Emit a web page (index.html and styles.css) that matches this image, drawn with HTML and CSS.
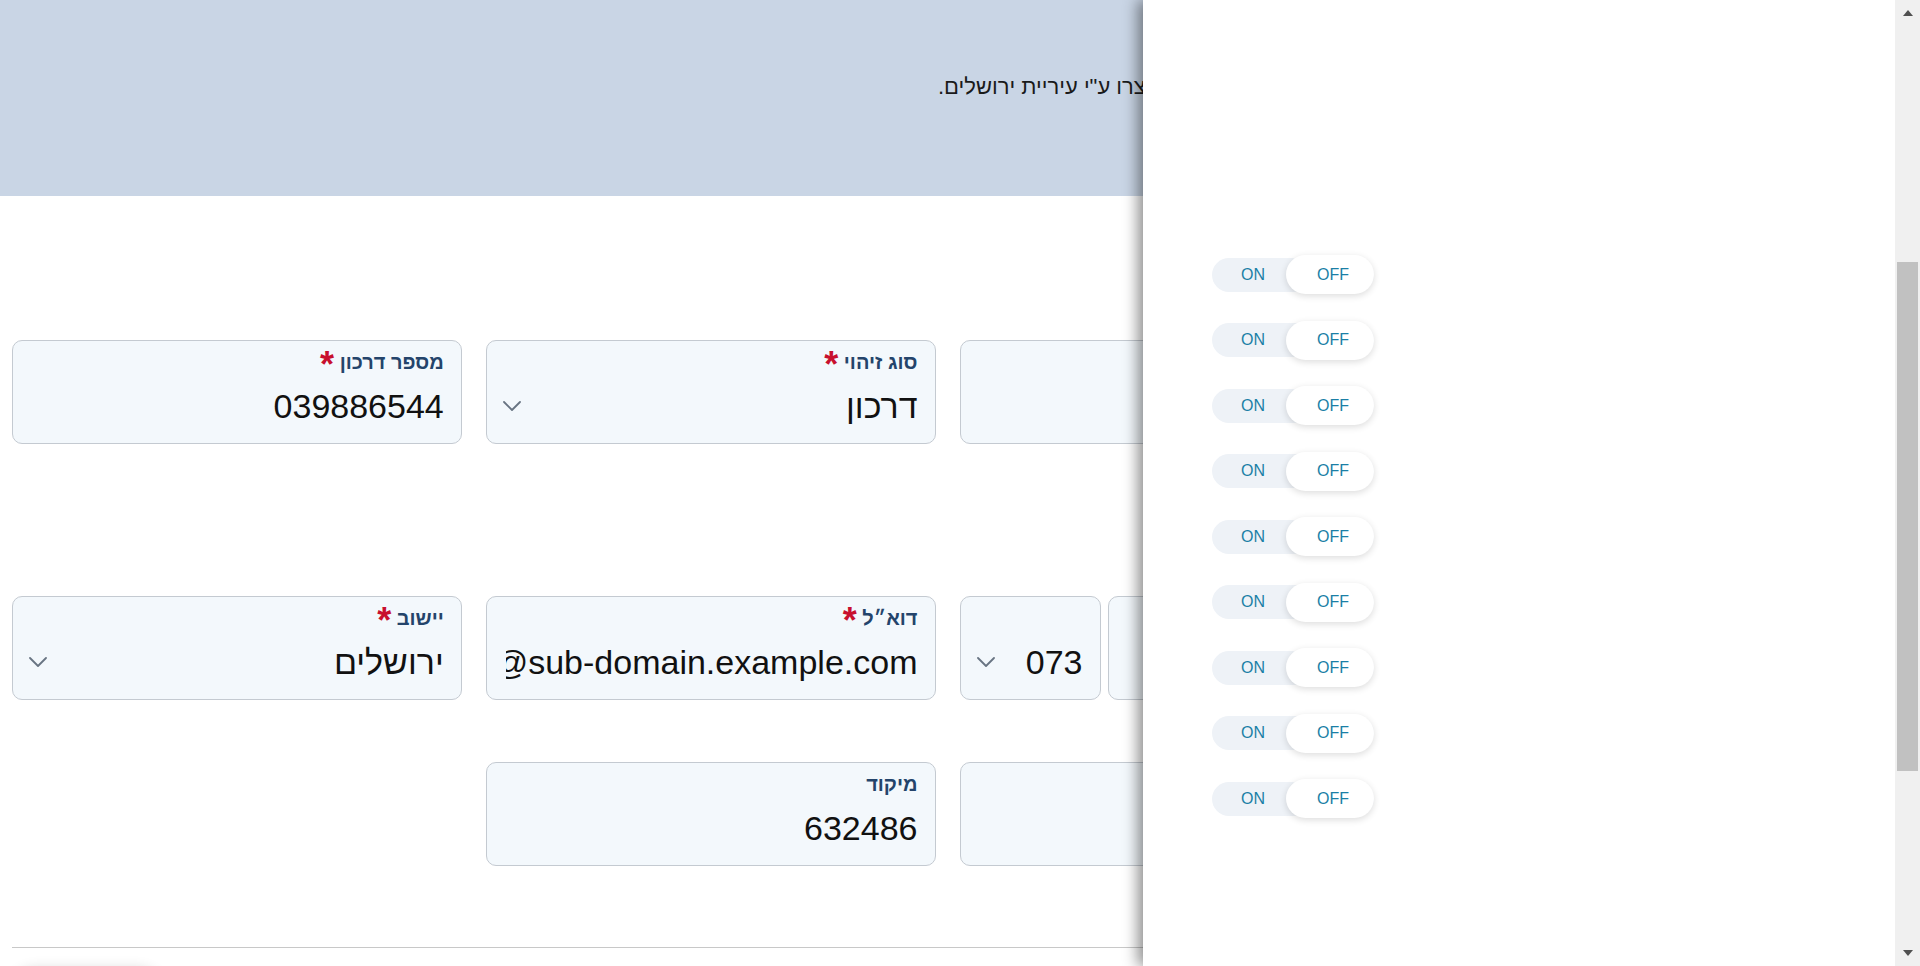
FILE: index.html
```html
<!DOCTYPE html>
<html lang="he">
<head>
<meta charset="utf-8">
<title>טופס פרטים</title>
<link rel="stylesheet" href="styles.css">
</head>
<body>
<div class="viewport">
  <div class="page" dir="rtl">
    <header class="hero">
      <p class="hero-text">המידע המוצג בטופס זה נשמר במאגרי המידע הרשמיים שנוצרו ע"י עיריית ירושלים.</p>
    </header>

    <main class="form">
      <h2 class="section-title">פרטים אישיים</h2>
      <div class="grid">
        <div class="field">
          <div class="label">סוג בקשה <span class="req">*</span></div>
          <div class="value-row"><div class="value">חדשה</div></div>
        </div>
        <div class="field">
          <div class="label">שם מלא <span class="req">*</span></div>
          <div class="value-row"><div class="value"></div></div>
        </div>
        <div class="field">
          <div class="label">סוג זיהוי <span class="req">*</span></div>
          <div class="value-row">
            <div class="value">דרכון</div>
            <svg class="chev" width="18" height="10" viewBox="0 0 18 10"><polyline points="1,1 9,9 17,1" fill="none" stroke="#687482" stroke-width="1.8" stroke-linecap="round" stroke-linejoin="round"/></svg>
          </div>
        </div>
        <div class="field">
          <div class="label">מספר דרכון <span class="req">*</span></div>
          <div class="value-row"><div class="value">039886544</div></div>
        </div>
      </div>

      <h2 class="section-title second">פרטי התקשרות</h2>
      <div class="grid">
        <div class="field">
          <div class="label">כתובת</div>
          <div class="value-row"><div class="value">הנביאים</div></div>
        </div>
        <div class="phone">
          <div class="field">
            <div class="label">טלפון <span class="req">*</span></div>
            <div class="value-row"><div class="value"></div></div>
          </div>
          <div class="field prefix">
            <div class="label">&nbsp;</div>
            <div class="value-row">
              <div class="value">073</div>
              <svg class="chev" width="18" height="10" viewBox="0 0 18 10"><polyline points="1,1 9,9 17,1" fill="none" stroke="#687482" stroke-width="1.8" stroke-linecap="round" stroke-linejoin="round"/></svg>
            </div>
          </div>
        </div>
        <div class="field">
          <div class="label">דוא״ל <span class="req">*</span></div>
          <div class="value-row"><div class="value"><span dir="ltr">israel.israeli@sub-domain.example.com</span></div></div>
        </div>
        <div class="field">
          <div class="label">יישוב <span class="req">*</span></div>
          <div class="value-row">
            <div class="value">ירושלים</div>
            <svg class="chev" width="18" height="10" viewBox="0 0 18 10"><polyline points="1,1 9,9 17,1" fill="none" stroke="#687482" stroke-width="1.8" stroke-linecap="round" stroke-linejoin="round"/></svg>
          </div>
        </div>

        <div class="field">
          <div class="label">מספר בית</div>
          <div class="value-row"><div class="value">12</div></div>
        </div>
        <div class="field">
          <div class="label">תא דואר</div>
          <div class="value-row"><div class="value"></div></div>
        </div>
        <div class="field">
          <div class="label">מיקוד</div>
          <div class="value-row"><div class="value">632486</div></div>
        </div>
        <div class="empty"></div>
      </div>

      <div class="divider"></div>
      <div class="actions">
        <button class="btn" type="button">שליחה</button>
      </div>
    </main>

    <aside class="drawer">
      <div class="toggle-row"><div class="toggle"><span class="on">ON</span><span class="off">OFF</span></div></div>
      <div class="toggle-row"><div class="toggle"><span class="on">ON</span><span class="off">OFF</span></div></div>
      <div class="toggle-row"><div class="toggle"><span class="on">ON</span><span class="off">OFF</span></div></div>
      <div class="toggle-row"><div class="toggle"><span class="on">ON</span><span class="off">OFF</span></div></div>
      <div class="toggle-row"><div class="toggle"><span class="on">ON</span><span class="off">OFF</span></div></div>
      <div class="toggle-row"><div class="toggle"><span class="on">ON</span><span class="off">OFF</span></div></div>
      <div class="toggle-row"><div class="toggle"><span class="on">ON</span><span class="off">OFF</span></div></div>
      <div class="toggle-row"><div class="toggle"><span class="on">ON</span><span class="off">OFF</span></div></div>
      <div class="toggle-row"><div class="toggle"><span class="on">ON</span><span class="off">OFF</span></div></div>
    </aside>
  </div>

  <div class="scrollbar">
    <div class="sb-btn up"><span class="arrow-up"></span></div>
    <div class="sb-track"><div class="sb-thumb"></div></div>
    <div class="sb-btn down"><span class="arrow-down"></span></div>
  </div>
</div>
</body>
</html>
```

FILE: styles.css
```css
* {
  box-sizing: border-box;
}

html,
body {
  margin: 0;
  height: 100%;
  overflow: hidden;
}

body {
  font-family: "Liberation Sans", "DejaVu Sans", Arial, sans-serif;
  color: #111;
  background: #fff;
}

.viewport {
  display: flex;
  height: 966px;
  direction: ltr;
}

.page {
  flex: 1;
  position: relative;
  overflow: hidden;
  direction: rtl;
}

/* Hero band */
.hero {
  height: 196px;
  background: #c9d5e5;
  display: flex;
  justify-content: flex-end;
  padding: 74px 12px 0 938px;
}

.hero-text {
  margin: 0;
  font-size: 22px;
  line-height: 26px;
  white-space: nowrap;
  color: #1a1a1a;
}

/* Form */
.form {
  padding: 0 12px;
}

.section-title {
  margin: 70px 0 38px;
  font-size: 28px;
  line-height: 36px;
  color: #1e3a5f;
}

.section-title.second {
  margin: 58px 0 58px;
}

.grid {
  display: grid;
  grid-template-columns: repeat(4, 1fr);
  column-gap: 24px;
  row-gap: 62px;
}

.field {
  height: 104px;
  border: 1px solid #c4cad1;
  border-radius: 10px;
  background: #f3f8fc;
  padding: 10px 17px 0 19px;
  display: flex;
  flex-direction: column;
  min-width: 0;
}

.label {
  font-size: 20px;
  line-height: 22px;
  font-weight: bold;
  color: #24446b;
  white-space: nowrap;
}

.req {
  color: #c8102e;
  font-size: 36px;
  font-weight: bold;
  line-height: 0;
  vertical-align: -8px;
}

.value-row {
  display: flex;
  align-items: center;
  margin-top: 13px;
  height: 40px;
}

.value {
  flex: 1;
  min-width: 0;
  font-size: 34px;
  line-height: 40px;
  white-space: nowrap;
  overflow: hidden;
  color: #111;
}

.chev {
  flex: none;
  margin-left: -3px;
}

.phone {
  display: flex;
  gap: 7px;
  min-width: 0;
}

.phone .field {
  flex: 1;
}

.phone .field.prefix {
  flex: none;
  width: 141px;
}

.divider {
  margin-top: 81px;
  border-top: 1px solid #c8c8c8;
}

.actions {
  display: flex;
  justify-content: flex-end;
  margin-top: 21px;
}

.btn {
  width: 150px;
  height: 48px;
  border: none;
  border-radius: 24px;
  background: #fff;
  box-shadow: 0 0 14px rgba(0, 0, 0, 0.16);
  font-family: inherit;
  font-size: 18px;
}

/* Drawer */
.drawer {
  position: absolute;
  top: 0;
  right: 0;
  bottom: 0;
  width: 752px;
  background: #fff;
  box-shadow: -5px 0 14px rgba(0, 0, 0, 0.45);
  direction: ltr;
  padding: 255px 0 0 69px;
  display: flex;
  flex-direction: column;
  gap: 26.5px;
}

.toggle-row {
  height: 39px;
  display: flex;
  align-items: center;
}

.toggle {
  display: flex;
  align-items: center;
  width: 162px;
  height: 34px;
  border-radius: 17px;
  background: #eef2f7;
}

.on {
  width: 82px;
  text-align: center;
  font-size: 16px;
  color: #1b7fa6;
}

.off {
  width: 88px;
  height: 39px;
  margin-left: -8px;
  border-radius: 20px;
  background: #fff;
  box-shadow: 0 2px 7px rgba(0, 0, 0, 0.14);
  display: flex;
  align-items: center;
  justify-content: center;
  padding-left: 6px;
  font-size: 16px;
  color: #1b7fa6;
}

/* Scrollbar */
.scrollbar {
  width: 25px;
  background: #f0f0f0;
  display: flex;
  flex-direction: column;
  align-items: center;
}

.sb-btn {
  height: 26px;
  width: 100%;
  display: flex;
  align-items: center;
  justify-content: center;
}

.sb-btn.down {
  height: 27px;
}

.sb-track {
  flex: 1;
  width: 100%;
  padding: 236px 2px 0;
}

.sb-thumb {
  height: 509px;
  background: #c1c1c1;
}

.arrow-up {
  width: 0;
  height: 0;
  border-left: 5.5px solid transparent;
  border-right: 5.5px solid transparent;
  border-bottom: 6px solid #505050;
}

.arrow-down {
  width: 0;
  height: 0;
  border-left: 5.5px solid transparent;
  border-right: 5.5px solid transparent;
  border-top: 6px solid #505050;
}
```
